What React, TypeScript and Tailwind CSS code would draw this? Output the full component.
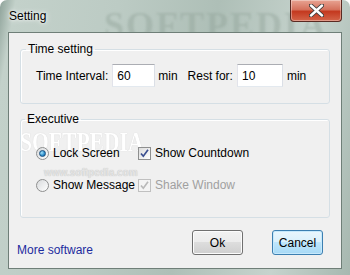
function Radio({ checked }: { checked?: boolean }) {
  return (
    <span className="flex h-[13px] w-[13px] items-center justify-center rounded-full border border-[#8e8f8f] bg-[linear-gradient(135deg,#d8dadc,#ffffff)]">
      {checked && (
        <span className="h-[7px] w-[7px] rounded-full border border-[#1c5180] bg-[radial-gradient(circle_at_35%_35%,#a6e3fb,#2a8ccb_60%,#0d5a94)]" />
      )}
    </span>
  );
}

function Check({ disabled }: { disabled?: boolean }) {
  return (
    <span
      className={
        disabled
          ? "flex h-[13px] w-[13px] items-center justify-center border border-[#c0c0c0] bg-[#f4f4f4]"
          : "flex h-[13px] w-[13px] items-center justify-center border border-[#8e8f8f] bg-[linear-gradient(135deg,#dcdcdc,#ffffff)]"
      }
    >
      <svg width="9" height="9" viewBox="0 0 9 9">
        <path
          d="M1 4.5 L3.3 7.2 L8 0.8"
          fill="none"
          stroke={disabled ? "#b9b9b9" : "#3b4f90"}
          strokeWidth="1.7"
        />
      </svg>
    </span>
  );
}

function Field({ value, w }: { value: string; w: string }) {
  return (
    <div
      className={`flex h-[23px] items-center border border-[#abadb3] border-b-[#e3e9ef] border-l-[#e2e3ea] border-r-[#dbdfe6] bg-white pl-[4px] text-black ${w}`}
    >
      {value}
    </div>
  );
}

export default function App() {
  return (
    <div
      className="relative h-[275px] w-[350px] overflow-hidden rounded-t-[7px] bg-[linear-gradient(100deg,#8fa39a_0%,#c3d1ca_4%,#bccbc4_30%,#aebfb7_55%,#c6d3cd_80%,#a7b8b0_100%)] text-[12px] text-black"
      style={{ fontFamily: '"Liberation Sans", Arial, sans-serif' }}
    >
      {/* title bar */}
      <div className="pointer-events-none absolute left-[104px] top-[-2px] text-[36px] font-bold tracking-[2px] text-[#8ea097]/40 blur-[1px]" style={{ fontFamily: '"Liberation Serif", serif' }}>
        SOFTPEDIA
      </div>
      <div className="relative flex h-[32px] items-start pl-[9px] pt-[9px]">
        <span className="text-[12px] leading-[15px] [text-shadow:0_0_6px_#ffffff,0_0_3px_#ffffff]">
          Setting
        </span>
      </div>
      <div className="absolute right-[8px] top-0 flex h-[22px] w-[52px] items-center justify-center rounded-b-[4px] border border-t-0 border-[#5a2a22] bg-[linear-gradient(#e8a493,#d5725d_45%,#c4391f_55%,#d4654a)] shadow-[inset_0_0_0_1px_rgba(255,255,255,0.35)]">
        <svg width="15" height="13" viewBox="0 0 15 13">
          <path d="M2 1.5 L13 11.5 M13 1.5 L2 11.5" stroke="#3c3c3c" strokeWidth="4.2" strokeLinecap="round" />
          <path d="M2 1.5 L13 11.5 M13 1.5 L2 11.5" stroke="#ffffff" strokeWidth="2.4" strokeLinecap="round" />
        </svg>
      </div>

      {/* client */}
      <div className="relative ml-[8px] mr-[8px] h-[237px] border border-[#6f7f78] bg-[#f0f0f0]">
        {/* watermark, behind the controls */}
        <div className="pointer-events-none absolute left-[11px] top-[96px] origin-left scale-x-[0.8] text-[27px] font-bold leading-none text-white [text-shadow:0_0_1px_#c8c8c8]" style={{ fontFamily: '"Liberation Serif", serif' }}>
          SOFTPEDIA
        </div>
        <div className="pointer-events-none absolute left-[35px] top-[135px] text-[10px] font-bold leading-none text-[#e4e4e4] [text-shadow:0_0_1px_#b8b8b8]">
          www.softpedia.com
        </div>

        <div className="relative flex flex-col px-[11px] pt-[9px]">
          <fieldset className="h-[62px] rounded-[3px] border border-[#d5dfe5] shadow-[inset_1px_1px_0_#ffffff]">
            <legend className="ml-[5px] px-[2px] leading-[15px]">Time setting</legend>
            <div className="mt-[7px] flex items-center pl-[15px]">
              <span>Time Interval:</span>
              <span className="ml-[4px]">
                <Field value="60" w="w-[43px]" />
              </span>
              <span className="ml-[3px]">min</span>
              <span className="ml-[10px]">Rest for:</span>
              <span className="ml-[4px]">
                <Field value="10" w="w-[46px]" />
              </span>
              <span className="ml-[4px]">min</span>
            </div>
          </fieldset>

          <fieldset className="mt-[8px] h-[106px] rounded-[3px] border border-[#d5dfe5] shadow-[inset_1px_1px_0_#ffffff]">
            <legend className="ml-[4px] px-[2px] leading-[15px]">Executive</legend>
            <div className="mt-[17px] grid grid-cols-[102px_auto] gap-y-[14px] pl-[15px]">
              <div className="flex items-center gap-[4px]">
                <Radio checked />
                <span>Lock Screen</span>
              </div>
              <div className="flex items-center gap-[4px]">
                <Check />
                <span>Show Countdown</span>
              </div>
              <div className="flex items-center gap-[4px]">
                <Radio />
                <span>Show Message</span>
              </div>
              <div className="flex items-center gap-[4px] text-[#a0a0a0]">
                <Check disabled />
                <span>Shake Window</span>
              </div>
            </div>
          </fieldset>

          <div className="mt-[12px] flex items-start">
            <span className="ml-[-3px] mt-[11px] text-[#1c2b9e]">More software</span>
            <button className="ml-auto h-[25px] w-[51px] rounded-[3px] border border-[#707070] bg-[linear-gradient(#f2f2f2,#ebebeb_50%,#dddddd_50%,#cfcfcf)] shadow-[inset_0_0_0_1px_#fcfcfc]">
              Ok
            </button>
            <button className="ml-[29px] mr-[7px] h-[25px] w-[51px] rounded-[3px] border border-[#3c7fb1] bg-[linear-gradient(#eaf6fd,#d9f0fc_50%,#bee6fd_50%,#a7d9f5)] shadow-[inset_0_0_0_1px_#c6e9fc]">
              Cancel
            </button>
          </div>
        </div>
      </div>
    </div>
  );
}
